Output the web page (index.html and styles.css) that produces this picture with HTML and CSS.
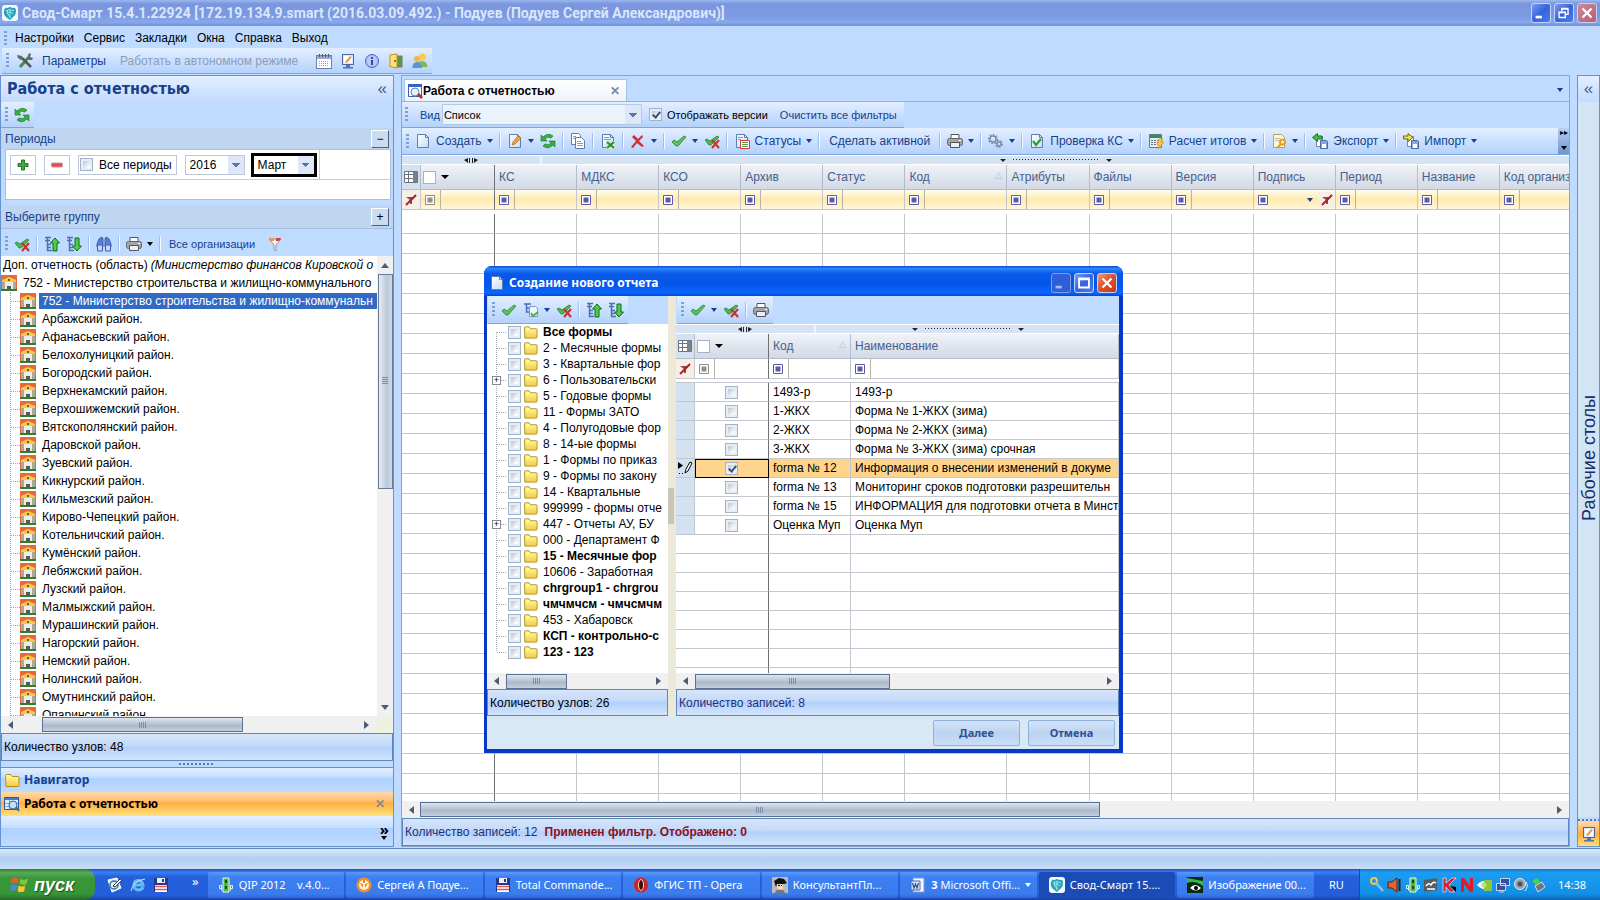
FILE: index.html
```html
<!DOCTYPE html>
<html lang="ru">
<head>
  <meta charset="UTF-8" />
  <meta name="viewport" content="width=device-width, initial-scale=1.0"/>
  <title>Свод-Смарт</title>
  <link rel="stylesheet" href="styles.css">
</head>
<body>
  <!-- Icons -->
  <svg class="sprite" aria-hidden="true">
    <defs>
      <linearGradient id="g-fold" x2="0" y2="1"><stop stop-color="#fffbb0"/><stop offset="1" stop-color="#f6cc3c"/></linearGradient>
      <linearGradient id="g-page" x2="1" y2="1"><stop stop-color="#fff"/><stop offset="1" stop-color="#c4dcf4"/></linearGradient>
    </defs>
    <symbol id="i-app" viewBox="0 0 16 16"><rect width="16" height="16" rx="3" fill="#eefafd"/><path d="M2 5q1-3 4-2 2-2 4 0 4-1 4 3 0 4-3 6l-3 3-4-3Q1 9 2 5z" fill="#2ba3bd"/><path d="M4 6q4-3 8 0M5 9q3-4 6 0M8 5v8M5 5q0 4 3 7" stroke="#a6e6ee" fill="none"/></symbol>
    <symbol id="i-tools" viewBox="0 0 16 16"><path d="M3 14l8-9" stroke="#4c8a4c" stroke-width="3"/><path d="M14 14L5 5" stroke="#555" stroke-width="2.500"/><path d="M0 2l5 1 1 3-2 1-3-2zM10 5l2-5 2 1-1 3 3 1-1 2-3 0z" fill="#666"/></symbol>
    <symbol id="i-cal" viewBox="0 0 16 16"><rect x=".5" y="2.500" width="15" height="13" fill="#fff" stroke="#6f7fae"/><path d="M1 3h14v3H1z" fill="#96a7d8"/><path d="M3 8.500h10M3 10.500h10M3 12.500h10" stroke="#9a9fb8" stroke-dasharray="1 1"/><path d="M3.500 1v3M6.500 1v3M9.500 1v3M12.500 1v3" stroke="#555"/></symbol>
    <symbol id="i-mon" viewBox="0 0 16 16"><rect x="2.500" y="1.500" width="11" height="10" fill="#d7e7ff" stroke="#4a66ac"/><path d="M4 3h8v7H4z" fill="#fff"/><path d="M5 9l5-6 2 1-5 6z" fill="#e59a56"/><path d="M6 12h4v2h3v1.500H3V14h3z" fill="#5672b4"/></symbol>
    <symbol id="i-info" viewBox="0 0 16 16"><circle cx="8" cy="8" r="6.500" fill="#a9bdf3" stroke="#4d62c0"/><circle cx="8" cy="8" r="5" fill="#b9c9f6"/><path d="M7 4h2v2H7zM7 7h2v5H7z" fill="#3347b8"/></symbol>
    <symbol id="i-door" viewBox="0 0 16 16"><path d="M8 3h6v11H8z" fill="#5a9a3c" stroke="#777"/><path d="M2 2l7 -1v14l-7-1.500z" fill="#ffe27a" stroke="#c48f1c"/><circle cx="7" cy="8" r="1" fill="#7a5200"/></symbol>
    <symbol id="i-users" viewBox="0 0 16 16"><circle cx="10.500" cy="4" r="3.500" fill="#ffc94d"/><path d="M5 14q0-6 5-6t5.500 6z" fill="#7fb758"/><circle cx="5" cy="6" r="3" fill="#f0b848"/><path d="M.5 15q0-6 4.500-6t5 6z" fill="#5d92d8"/></symbol>
    <symbol id="i-refresh" viewBox="0 0 16 16"><g fill="#35b13d" stroke="#14701e" stroke-width=".6"><path d="M1 2v6h6L5 6q2-3 6-1l2-2Q8-1 3 4z"/><path d="M15 14V8H9l2 2q-2 3-6 1l-2 2q5 4 10-1z"/></g></symbol>
    <symbol id="i-plus" viewBox="0 0 16 16"><path d="M6.500 3h3v3.500H13v3H9.500V13h-3V9.500H3v-3h3.500z" fill="#3fa843" stroke="#247a29"/></symbol>
    <symbol id="i-minus" viewBox="0 0 16 16"><rect x="2.500" y="6" width="11" height="4" rx="1" fill="#e2475c" stroke="#c98" /></symbol>
    <symbol id="i-check" viewBox="0 0 16 16"><path d="M1 9l2-2 3 2 7-6 2 1-8 9H5z" fill="#5cc15c" stroke="#2b8532" stroke-width=".8"/></symbol>
    <symbol id="i-uncheck" viewBox="0 0 16 16"><path d="M1 7l2-1 3 2 7-5 2 1-8 8H5z" fill="#4ab94d" stroke="#2b8532" stroke-width=".8"/><path d="M8 7l7 8M15 7l-7 8" stroke="#c5352d" stroke-width="2.200"/></symbol>
    <symbol id="i-tree" viewBox="0 0 16 16"><path d="M1 1.500h6M1 4.500h5M3.500 2v12.500H8M3.500 8.500H7M3.500 11.500H7" stroke="#4d6fb4" stroke-width="1.500" fill="none"/></symbol>
    <symbol id="i-up" viewBox="0 0 16 16"><use href="#i-tree"/><path d="M11 2l4.500 5H13v8H9V7H6.500z" fill="#4fca50" stroke="#126a1c"/></symbol>
    <symbol id="i-down" viewBox="0 0 16 16"><use href="#i-tree"/><path d="M11 15l4.500-5H13V2H9v8H6.500z" fill="#4fca50" stroke="#126a1c"/></symbol>
    <symbol id="i-bino" viewBox="0 0 16 16"><path d="M3 3l3-2 1 2v8H1V8zM13 3l-3-2-1 2v8h6V8z" fill="#5a7fd2" stroke="#3f5cb0"/><path d="M1.500 9h5v6h-5zM9.500 9h5v6h-5z" fill="#c6d6fa" stroke="#3f5cb0"/></symbol>
    <symbol id="i-print" viewBox="0 0 16 16"><path d="M4 1.500h8V6H4z" fill="#fff" stroke="#555"/><rect x=".5" y="5.500" width="15" height="7" rx="2" fill="#a5a5a8" stroke="#66666a"/><path d="M3.500 9.500h9v5h-9z" fill="#e8f1fb" stroke="#555"/><path d="M12 7h2v1h-2z" fill="#fff"/></symbol>
    <symbol id="i-funnel" viewBox="0 0 16 16"><path d="M2 3h12l-5 6v6l-2-1.500V9z" fill="#f3f5fa" stroke="#8d93a6"/><path d="M2 2h5v3H3z" fill="#f09a3a"/><path d="M9 2h5l-2 3H9z" fill="#d2413a"/></symbol>
    <symbol id="i-house" viewBox="0 0 16 16"><path d="M0 0h16v16H0z" fill="#e8683c"/><path d="M1 6h14v8H1z" fill="#a9ab98"/><path d="M4 7h8v7H4z" fill="#eceee6"/><path d="M1 7V5l7-3 7 3v2z" fill="#ffc844"/><path d="M7 4h2v2H7z" fill="#6b5a4a"/><path d="M6 11h4v3H6z" fill="#5a5652"/><path d="M0 14h16v2H0z" fill="#2e7d28"/></symbol>
    <symbol id="i-folder" viewBox="0 0 16 16"><path d="M1.500 3.500q0-1 1-1h4l1.500 2h6q1 0 1 1v8q0 1-1 1h-12z" fill="url(#g-fold)" stroke="#b38f22"/></symbol>
    <symbol id="i-page" viewBox="0 0 16 16"><path d="M2.500 1.500h8l3 3v10h-11z" fill="url(#g-page)" stroke="#5c7fae"/><path d="M10.500 1.500v3h3" fill="none" stroke="#5c7fae"/></symbol>
    <symbol id="i-edit" viewBox="0 0 16 16"><use href="#i-page"/><path d="M5 12l1-3 5-6 3 2-6 6z" fill="#f0a040" stroke="#a85e18" stroke-width=".6"/></symbol>
    <symbol id="i-copy" viewBox="0 0 16 16"><path d="M1.500 .5h7l2 2v9h-9z" fill="#fff" stroke="#5c7fae"/><path d="M3 3.500h3M3 5.500h2" stroke="#7f9ccc"/><path d="M5.500 4.500h6l3 3v8h-9z" fill="#fff" stroke="#5c7fae"/><path d="M7 8.500h4M7 10.500h6M7 12.500h6" stroke="#7f9ccc"/></symbol>
    <symbol id="i-excel" viewBox="0 0 16 16"><use href="#i-page"/><path d="M4 4.500h5M4 6.500h7" stroke="#7f9ccc"/><path d="M6 8h9v8H6z" fill="#cfeccf"/><path d="M7 9l7 6M14 9l-7 6" stroke="#2c8a34" stroke-width="2"/></symbol>
    <symbol id="i-x" viewBox="0 0 16 16"><path d="M2 4l2-2 4 4 4-4 1 2-4 4 5 5-2 1-5-4-4 5-2-1 5-6z" fill="#d22d2a"/></symbol>
    <symbol id="i-status" viewBox="0 0 16 16"><use href="#i-page"/><path d="M4 4.500h5M4 6.500h3" stroke="#7f9ccc"/><path d="M6.500 7.500h9v8h-9z" fill="#fff" stroke="#d0392f"/><path d="M8 9.500h6M8 11.500h6M8 13.500h6" stroke="#5a9a5a"/></symbol>
    <symbol id="i-gears" viewBox="0 0 16 16"><g fill="none" stroke="#8a94a6" stroke-width="2" stroke-dasharray="2 1"><circle cx="5" cy="6" r="4"/><circle cx="11" cy="11" r="3"/></g><g fill="none" stroke="#6c7890"><circle cx="5" cy="6" r="3"/><circle cx="11" cy="11" r="2"/></g></symbol>
    <symbol id="i-okpage" viewBox="0 0 16 16"><use href="#i-page"/><path d="M4 8l3 4 5-6" stroke="#2f9e36" stroke-width="2.200" fill="none"/></symbol>
    <symbol id="i-calc" viewBox="0 0 16 16"><path d="M1.500 1.500h12v13h-12z" fill="#e6ecf4" stroke="#66788f"/><path d="M2 2h11v3H2z" fill="#2f9440"/><path d="M3 7.500h9M3 9.500h9M3 11.500h9" stroke="#66788f" stroke-dasharray="2 1"/><path d="M11 6l4 0-2 3h3l-6 7 1-4H9z" fill="#ffc83a" stroke="#c88a1c" stroke-width=".6"/></symbol>
    <symbol id="i-key" viewBox="0 0 16 16"><path d="M2.500 1.500h8l3 3v10h-11z" fill="#fff7cf" stroke="#b3a16a"/><path d="M4 5.500h5M4 7.500h4" stroke="#b9b9b9"/><circle cx="11.500" cy="9" r="2.500" fill="none" stroke="#e0a01c" stroke-width="2"/><path d="M10 11l-4 4" stroke="#e0a01c" stroke-width="2"/></symbol>
    <symbol id="i-disk" viewBox="0 0 16 16"><path d="M4.500 3.500h6v10h-6z" fill="#fff" stroke="#6d87b5"/><path d="M8.500 7.500h6l1 1v7h-7z" fill="#8aa6d8" stroke="#4d6aa5"/><path d="M10 11h4v4h-4z" fill="#fff"/></symbol>
    <symbol id="i-export" viewBox="0 0 16 16"><use href="#i-disk"/><path d="M.5 4.500l5-4V3H10v3H5.500v2.500z" fill="#3fc043" stroke="#14701e"/></symbol>
    <symbol id="i-import" viewBox="0 0 16 16"><use href="#i-disk"/><path d="M10 4.500l-5-4V3H.5v3H5v2.500z" fill="#ece04a" stroke="#6f6a12"/></symbol>
    <symbol id="i-grid" viewBox="0 0 16 16"><path d="M1.500 2.500h13v11h-13z" fill="#fff" stroke="#6b7280"/><path d="M1 5.500h14M1 9.500h14M5.500 3v10" stroke="#6b7280"/><path d="M10 3h4v10h-4z" fill="#7b828f"/></symbol>
    <symbol id="i-nofilter" viewBox="0 0 16 16"><path d="M3 5h9l-3 3v4H7V8z" fill="#8c4a4a"/><path d="M3 13L13 3" stroke="#b01f2c" stroke-width="2"/></symbol>
    <symbol id="i-box" viewBox="0 0 12 12"><path d="M1.500 1.500h9v9h-9z" fill="#fff" stroke="currentColor"/><path d="M3.500 3.500h5v5h-5z" fill="currentColor"/></symbol>
    <symbol id="i-report" viewBox="0 0 16 16"><path d="M1.500 1.500h13v12h-13z" fill="#fff" stroke="#3c5fae"/><path d="M1 1h14v3H1z" fill="#3463c4"/><circle cx="8" cy="9" r="4" fill="#e4f1fc" stroke="#5c87bd"/><path d="M11 11l4 4" stroke="#b32a22" stroke-width="2.500"/></symbol>
    <symbol id="i-navrep" viewBox="0 0 16 16"><path d="M.5 1.500h14v12H.5z" fill="#dcecff" stroke="#2f5ba0"/><path d="M1 2h13v2H1z" fill="#4a78c8"/><path d="M1 7.500h13M1 10.500h13M5.500 4v9" stroke="#84a6d8"/><circle cx="9" cy="9" r="4" fill="#bfe0f8" stroke="#39689f"/><path d="M12 11l3 4" stroke="#39689f" stroke-width="2"/></symbol>
    <symbol id="i-forms" viewBox="0 0 16 16"><path d="M1 2h7M3.500 2v8H7M3.500 6H7" stroke="#4d6fb4" stroke-width="1.500" fill="none"/><path d="M6.500 4.500h6l2 2v8h-8z" fill="#eaf3ff" stroke="#7b98c9"/><path d="M8 11l2 3 5-4" stroke="#4fae4f" stroke-width="2" fill="none"/></symbol>
    <symbol id="i-rowedit" viewBox="0 0 16 16"><path d="M1 2l5 3.500L1 9z"/><path d="M2 13.500h6" stroke="#000" stroke-dasharray="1 2"/><path d="M8 13l1-4 4-7 2 1-4 8z" fill="#fff" stroke="#000"/></symbol>
    <symbol id="i-win" viewBox="0 0 20 20"><path d="M2 4q4-2 7 0L8 9Q5 7 1 9z" fill="#ee5a30"/><path d="M11 4q3 2 8 0l-2 6q-4 1-7-1z" fill="#7ec53c"/><path d="M1 11q3-2 7 0l-2 6q-3-2-6 0z" fill="#4a86e8"/><path d="M9 11q4 2 7 0l-1 6q-4 2-7 0z" fill="#fbc72c"/></symbol>
    <symbol id="i-desk" viewBox="0 0 16 16"><path d="M1 3l9-2 4 10-9 4z" fill="#d8f2fb" stroke="#fff"/><circle cx="7" cy="8" r="4" fill="none" stroke="#3d7796" stroke-width="1.500"/><path d="M6 9l7-7 2 1-7 7z" fill="#fff" stroke="#335"/></symbol>
    <symbol id="i-ie" viewBox="0 0 16 16"><path d="M13 10q-1 3-5 3-4-.5-4-5t4-4.500q4 0 5 4.500H5" fill="none" stroke="#62bdf5" stroke-width="3"/><path d="M1 14Q3 4 15 2" stroke="#cdeafd" fill="none"/></symbol>
    <symbol id="i-floppy" viewBox="0 0 16 16"><path d="M1 1h14v14H1z" fill="#223a8e"/><path d="M4 1h8v5H4z" fill="#e9eef8"/><path d="M9 2h2v3H9z" fill="#223a8e"/><path d="M2 8h12v7H2z" fill="#fff"/><path d="M2 9.500h12M2 12.500h12" stroke="#e05a50" stroke-width="1.500"/></symbol>
    <symbol id="i-qip" viewBox="0 0 16 16"><path d="M5 1h6v14H5z" fill="#4fb84a" stroke="#e7ffe4"/><path d="M7 3h2v3H7zM7 9h2v3H7z" fill="#154d14"/><path d="M1.500 8.500h2v5M1.500 8.500v3h2M14.500 8.500h-2v5M14.500 8.500v3h-2" fill="none" stroke="#e4f4e4"/></symbol>
    <symbol id="i-mail" viewBox="0 0 16 16"><circle cx="8" cy="8" r="7.500" fill="#f0902a"/><circle cx="8" cy="8" r="5" fill="#fff2dd"/><path d="M4 6l3 1v4zM12 6L9 7v4zM7 3h2v3H7z" fill="#e8842a"/></symbol>
    <symbol id="i-opera" viewBox="0 0 16 16"><ellipse cx="8" cy="8" rx="7" ry="7.500" fill="#d3231e"/><ellipse cx="8" cy="8" rx="2.500" ry="5.500" fill="#3c0b0b" stroke="#f6d0cc"/></symbol>
    <symbol id="i-kons" viewBox="0 0 16 16"><path d="M0 0h16v16H0z" fill="#b6bcc6"/><path d="M2 4l5-3 5 1 3 4-3 1-7 0-1 3z" fill="#111"/><path d="M5 7h6v5l-3 1-3-2z" fill="#f2d7b8"/><path d="M6 8.500h2M9 8.500h1" stroke="#111"/><path d="M3 16q1-4 5-3 4-1 5 3z" fill="#777"/></symbol>
    <symbol id="i-word" viewBox="0 0 16 16"><path d="M3 1h11v14H3z" fill="#f4f8ff" stroke="#7d9bd4"/><path d="M1 4h9v9H1z" fill="#dce8fb" stroke="#4468b4"/><path d="M2.500 6l1.500 5 1.500-4L7 11l1.500-5" stroke="#2b4c9c" fill="none" stroke-width="1.200"/></symbol>
    <symbol id="i-img" viewBox="0 0 16 16"><path d="M0 0h16v16H0z" fill="#0b2a12"/><path d="M0 1l16 3v5Q8 3 0 6z" fill="#35b84a"/><path d="M3 11q5-6 11 0-5 5-11 0z" fill="#fff"/><circle cx="9" cy="11" r="2"/></symbol>
    <symbol id="i-tkey" viewBox="0 0 16 16"><circle cx="5" cy="4" r="3" fill="none" stroke="#f2c24a" stroke-width="2"/><path d="M7 6l7 8" stroke="#7fc5f2" stroke-width="2.500"/></symbol>
    <symbol id="i-sound" viewBox="0 0 16 16"><path d="M1 5h4l5-4v14l-5-4H1z" fill="#d8683a" stroke="#5a1f0a"/><path d="M12.500 2v12" stroke="#222" fill="none" stroke-width="2"/></symbol>
    <symbol id="i-oo" viewBox="0 0 16 16"><path d="M1 3l13-2v12l-13 2z" fill="#555d66"/><path d="M3 9q3-4 5-1 2-4 5-2M4 12h8" stroke="#fff" fill="none" stroke-width="1.500"/></symbol>
    <symbol id="i-kasp" viewBox="0 0 16 16"><path d="M2 1h3v5l6-5h4L8 8l6 7H9L5 10v5H2z" fill="#d9232e" stroke="#fff" stroke-width=".6"/><path d="M9 9l6 6v-5z"/></symbol>
    <symbol id="i-n" viewBox="0 0 16 16"><path d="M2 15V1h3l6 8V1h3v14h-3L5 7v8z" fill="#e01b24"/></symbol>
    <symbol id="i-nv" viewBox="0 0 16 16"><path d="M0 8q5-6 10-3v7Q4 13 0 8z" fill="#f3f7ea"/><path d="M7 3h8v11H7z" fill="#8cc63c"/><circle cx="7" cy="8" r="2.500" fill="#b9dd8a"/></symbol>
    <symbol id="i-net" viewBox="0 0 16 16"><path d="M5.500 1.500h9v7h-9zM1.500 6.500h9v7h-9z" fill="#3a4f9c" stroke="#c9d6f2"/><path d="M4 15h5" stroke="#ccc"/></symbol>
    <symbol id="i-vol" viewBox="0 0 16 16"><circle cx="7" cy="7" r="5.500" fill="#9aa3ad" stroke="#e6ecf2"/><circle cx="7" cy="7" r="2.500" fill="#4a525c"/><path d="M13 5q3 4-1 9" stroke="#e6ecf2" fill="none"/></symbol>
    <symbol id="i-usb" viewBox="0 0 16 16"><path d="M4 9l7-4 3 5-7 5z" fill="#6e7780" stroke="#d8dde2"/><path d="M1 4l5-3 3 4-4 3z" fill="#4fcf4a"/></symbol>
  </svg>

  <!-- Main window title -->
  <header class="titlebar">
    <svg class="ic"><use href="#i-app"/></svg>
    <h1>Свод-Смарт 15.4.1.22924 [172.19.134.9.smart (2016.03.09.492.) - Подуев (Подуев Сергей Александрович)]</h1>
    <div class="win-buttons">
      <button class="wb" aria-label="Свернуть"><svg viewBox="0 0 20 20"><path d="M4 13h7v3H4z" fill="#fff"/></svg></button>
      <button class="wb" aria-label="Восстановить"><svg viewBox="0 0 20 20"><path d="M7.500 8V5.500h7v6H12M4.500 9h7v6h-7zM4 9.500h8M7 5h8" stroke="#fff" fill="none" stroke-width="1.500"/></svg></button>
      <button class="wb wb-close dim" aria-label="Закрыть"><svg viewBox="0 0 20 20"><path d="M5 5l10 10M15 5L5 15" stroke="#fff" stroke-width="2.500"/></svg></button>
    </div>
  </header>

  <nav class="menu">
    <span class="grip"></span>
    <button>Настройки</button><button>Сервис</button><button>Закладки</button><button>Окна</button><button>Справка</button><button>Выход</button>
  </nav>
  <div class="bar top-bar">
    <span class="grip"></span>
    <button class="tb wide"><svg class="ic"><use href="#i-tools"/></svg>Параметры</button>
    <button class="tb off" disabled>Работать в автономном режиме</button>
    <button class="tb" aria-label="Календарь"><svg class="ic"><use href="#i-cal"/></svg></button>
    <button class="tb" aria-label="Рабочий стол"><svg class="ic"><use href="#i-mon"/></svg></button>
    <button class="tb" aria-label="О программе"><svg class="ic"><use href="#i-info"/></svg></button>
    <button class="tb" aria-label="Выход"><svg class="ic"><use href="#i-door"/></svg></button>
    <button class="tb" aria-label="Пользователи"><svg class="ic"><use href="#i-users"/></svg></button>
  </div>

  <main class="work">
    <!-- Left panel -->
    <aside class="side">
      <div class="side-head"><h2>Работа с отчетностью</h2><button class="plain" aria-label="Скрыть">«</button></div>
      <div class="bar refresh-bar"><span class="grip"></span><button class="tb" aria-label="Обновить"><svg class="ic"><use href="#i-refresh"/></svg></button></div>
      <div class="sect"><span>Периоды</span><button class="fold" aria-label="Свернуть периоды">−</button></div>
      <div class="periods">
        <div class="period-row">
          <button class="pbtn" aria-label="Добавить"><svg class="ic"><use href="#i-plus"/></svg></button>
          <button class="pbtn" aria-label="Удалить"><svg class="ic"><use href="#i-minus"/></svg></button>
          <label class="all"><input type="checkbox"> Все периоды</label>
          <select class="drop year" aria-label="Год"><option>2016</option></select>
          <select class="drop month" aria-label="Месяц"><option>Март</option></select>
          <span class="period-end"></span>
        </div>
      </div>
      <div class="sect group"><span>Выберите группу</span><button class="fold" aria-label="Развернуть группы">+</button></div>
      <div class="bar side-bar">
        <span class="grip"></span>
        <button class="tb" aria-label="Снять отметки"><svg class="ic"><use href="#i-uncheck"/></svg></button><i class="sep"></i>
        <button class="tb" aria-label="Свернуть дерево"><svg class="ic"><use href="#i-up"/></svg></button>
        <button class="tb" aria-label="Развернуть дерево"><svg class="ic"><use href="#i-down"/></svg></button><i class="sep"></i>
        <button class="tb" aria-label="Найти"><svg class="ic"><use href="#i-bino"/></svg></button><i class="sep"></i>
        <button class="tb" aria-label="Печать"><svg class="ic"><use href="#i-print"/></svg><b class="caret"></b></button><i class="sep"></i>
        <button class="tb all-org">Все организации</button>
        <button class="tb" aria-label="Фильтр"><svg class="ic"><use href="#i-funnel"/></svg></button>
      </div>
      <div class="tree-wrap">
        <div class="tree">
          <div class="t-top">Доп. отчетность (область) <em>(Министерство финансов Кировской о</em></div>
          <div class="t-root"><svg class="ic"><use href="#i-house"/></svg>752 - Министерство строительства и жилищно-коммунального</div>
          <ul id="orgs"></ul>
        </div>
        <div class="vscroll"><b class="ar up"></b><span class="thumb"></span><b class="ar down"></b></div>
      </div>
      <div class="hscroll side-scroll"><b class="ar left"></b><span class="thumb"></span><b class="ar right"></b><i class="corner"></i></div>
      <div class="status dark">Количество узлов: 48</div>
      <div class="splitter"><span></span></div>
      <button class="nav"><svg class="ic"><use href="#i-folder"/></svg>Навигатор</button>
      <button class="nav on"><svg class="ic"><use href="#i-navrep"/></svg>Работа с отчетностью<span class="nav-x">✕</span></button>
      <div class="nav more"><span>»</span><b class="caret"></b></div>
    </aside>

    <!-- Report list -->
    <section class="content">
      <div class="tabs">
        <div class="tab"><svg class="ic"><use href="#i-report"/></svg><span>Работа с отчетностью</span><button class="plain tab-x" aria-label="Закрыть вкладку">✕</button></div>
        <b class="caret"></b>
      </div>
      <div class="bar view-bar">
        <span class="grip"></span>
        <label for="view">Вид</label>
        <select class="drop view" id="view"><option>Список</option></select>
        <label class="ver"><input type="checkbox" checked> Отображать версии</label>
        <button class="tb">Очистить все фильтры</button>
      </div>
      <div class="bar main-bar">
        <span class="grip"></span>
        <button class="tb"><svg class="ic"><use href="#i-page"/></svg>Создать<b class="caret far"></b></button><i class="sep"></i>
        <button class="tb" aria-label="Изменить"><svg class="ic"><use href="#i-edit"/></svg><b class="caret"></b></button>
        <button class="tb" aria-label="Обновить"><svg class="ic"><use href="#i-refresh"/></svg></button><i class="sep"></i>
        <button class="tb" aria-label="Копировать"><svg class="ic"><use href="#i-copy"/></svg></button><i class="sep"></i>
        <button class="tb" aria-label="Excel"><svg class="ic"><use href="#i-excel"/></svg></button><i class="sep"></i>
        <button class="tb" aria-label="Удалить"><svg class="ic"><use href="#i-x"/></svg><b class="caret"></b></button><i class="sep"></i>
        <button class="tb" aria-label="Отметить"><svg class="ic"><use href="#i-check"/></svg><b class="caret"></b></button>
        <button class="tb" aria-label="Снять отметки"><svg class="ic"><use href="#i-uncheck"/></svg></button><i class="sep"></i>
        <button class="tb"><svg class="ic"><use href="#i-status"/></svg>Статусы<b class="caret far"></b></button><i class="sep"></i>
        <button class="tb text-only">Сделать активной</button><i class="sep"></i>
        <button class="tb" aria-label="Печать"><svg class="ic"><use href="#i-print"/></svg><b class="caret"></b></button><i class="sep"></i>
        <button class="tb" aria-label="Операции"><svg class="ic"><use href="#i-gears"/></svg><b class="caret"></b></button><i class="sep"></i>
        <button class="tb"><svg class="ic"><use href="#i-okpage"/></svg>Проверка КС<b class="caret far"></b></button><i class="sep"></i>
        <button class="tb"><svg class="ic"><use href="#i-calc"/></svg>Расчет итогов<b class="caret far"></b></button><i class="sep"></i>
        <button class="tb" aria-label="Подпись"><svg class="ic"><use href="#i-key"/></svg><b class="caret"></b></button><i class="sep"></i>
        <button class="tb"><svg class="ic"><use href="#i-export"/></svg>Экспорт<b class="caret far"></b></button><i class="sep"></i>
        <button class="tb"><svg class="ic"><use href="#i-import"/></svg>Импорт<b class="caret far"></b></button>
        <span class="overflow"><span>▸▸</span><b class="caret"></b></span>
      </div>
      <div class="bands"><span class="band1"><i></i></span><span class="band2"><i></i></span></div>
      <div class="grid-wrap">
        <table class="grid main-grid" id="main-grid"></table>
      </div>
      <div class="hscroll main-scroll"><b class="ar left"></b><span class="thumb"></span><b class="ar right"></b></div>
      <div class="status">Количество записей: 12 <strong>Применен фильтр. Отображено: 0</strong></div>
    </section>

    <!-- Collapsed right panel -->
    <aside class="dock">
      <button class="plain" aria-label="Показать">«</button>
      <div class="dock-body"><span>Рабочие столы</span></div>
      <div class="dots"></div>
      <button class="dock-ic" aria-label="Рабочие столы"><svg class="ic"><use href="#i-mon"/></svg></button>
    </aside>
  </main>
  <div class="app-status"></div>

  <!-- New report dialog -->
  <div class="dialog" role="dialog" aria-labelledby="dlg-title">
    <div class="dlg-head">
      <svg class="ic"><use href="#i-page"/></svg>
      <h2 id="dlg-title">Создание нового отчета</h2>
      <div class="win-buttons">
        <button class="wb dim" aria-label="Свернуть"><svg viewBox="0 0 20 20"><path d="M4 13h7v3H4z" fill="#9fb9f2"/></svg></button>
        <button class="wb" aria-label="Развернуть"><svg viewBox="0 0 20 20"><path d="M4.500 5h11v10h-11zM4 6h12" stroke="#fff" fill="none" stroke-width="2"/></svg></button>
        <button class="wb wb-close" aria-label="Закрыть"><svg viewBox="0 0 20 20"><path d="M5 5l10 10M15 5L5 15" stroke="#fff" stroke-width="2.500"/></svg></button>
      </div>
    </div>
    <div class="dlg-body">
      <div class="forms">
        <div class="tool-line"><div class="bar">
          <span class="grip"></span>
          <button class="tb" aria-label="Отметить"><svg class="ic"><use href="#i-check"/></svg></button>
          <button class="tb" aria-label="Отметить ветку"><svg class="ic"><use href="#i-forms"/></svg><b class="caret"></b></button>
          <button class="tb" aria-label="Снять отметки"><svg class="ic"><use href="#i-uncheck"/></svg></button><i class="sep"></i>
          <button class="tb" aria-label="Свернуть дерево"><svg class="ic"><use href="#i-up"/></svg></button>
          <button class="tb" aria-label="Развернуть дерево"><svg class="ic"><use href="#i-down"/></svg></button>
        </div></div>
        <ul id="forms"></ul>
        <div class="hscroll"><b class="ar left"></b><span class="thumb"></span><b class="ar right"></b></div>
        <div class="status dark">Количество узлов: 26</div>
      </div>
      <div class="dlg-split"><span></span></div>
      <div class="picks">
        <div class="tool-line"><div class="bar">
          <span class="grip"></span>
          <button class="tb" aria-label="Отметить"><svg class="ic"><use href="#i-check"/></svg><b class="caret"></b></button>
          <button class="tb" aria-label="Снять отметки"><svg class="ic"><use href="#i-uncheck"/></svg></button><i class="sep"></i>
          <button class="tb" aria-label="Печать"><svg class="ic"><use href="#i-print"/></svg></button>
        </div></div>
        <div class="bands"><span class="band1"><i></i></span><span class="band2"><i></i></span></div>
        <div class="grid-wrap">
          <table class="grid pick-grid" id="pick-grid"></table>
        </div>
        <div class="hscroll"><b class="ar left"></b><span class="thumb"></span><b class="ar right"></b></div>
        <div class="status">Количество записей: 8</div>
      </div>
    </div>
    <div class="dlg-foot"><button>Далее</button><button>Отмена</button></div>
  </div>

  <!-- Taskbar -->
  <footer class="taskbar">
    <button class="start"><svg class="flag"><use href="#i-win"/></svg>пуск</button>
    <div class="quick">
      <svg class="ic"><use href="#i-desk"/></svg><svg class="ic"><use href="#i-ie"/></svg><svg class="ic"><use href="#i-floppy"/></svg><span>»</span>
    </div>
    <div class="tasks">
      <button class="task"><svg class="ic"><use href="#i-qip"/></svg>QIP 2012 &nbsp;&nbsp; v.4.0...</button>
      <button class="task"><svg class="ic"><use href="#i-mail"/></svg>Сергей А Подуе...</button>
      <button class="task"><svg class="ic"><use href="#i-floppy"/></svg>Total Commande...</button>
      <button class="task"><svg class="ic"><use href="#i-opera"/></svg>ФГИС ТП - Opera</button>
      <button class="task"><svg class="ic"><use href="#i-kons"/></svg>КонсультантПл...</button>
      <button class="task"><svg class="ic"><use href="#i-word"/></svg><span><strong>3</strong> Microsoft Offi...</span><b class="caret"></b></button>
      <button class="task active"><svg class="ic"><use href="#i-app"/></svg>Свод-Смарт 15....</button>
      <button class="task"><svg class="ic"><use href="#i-img"/></svg>Изображение 00...</button>
    </div>
    <span class="lang">RU</span>
    <div class="tray">
      <svg class="ic"><use href="#i-tkey"/></svg><svg class="ic"><use href="#i-sound"/></svg><svg class="ic"><use href="#i-qip"/></svg><svg class="ic"><use href="#i-oo"/></svg><svg class="ic"><use href="#i-kasp"/></svg><svg class="ic"><use href="#i-n"/></svg><svg class="ic"><use href="#i-nv"/></svg><svg class="ic"><use href="#i-net"/></svg><svg class="ic"><use href="#i-vol"/></svg><svg class="ic"><use href="#i-usb"/></svg>
      <time>14:38</time>
    </div>
  </footer>

  <script>
    const orgs = ['Арбажский', 'Афанасьевский', 'Белохолуницкий', 'Богородский', 'Верхнекамский', 'Верхошижемский',
      'Вятскополянский', 'Даровской', 'Зуевский', 'Кикнурский', 'Кильмезский', 'Кирово-Чепецкий', 'Котельничский',
      'Кумёнский', 'Лебяжский', 'Лузский', 'Малмыжский', 'Мурашинский', 'Нагорский', 'Немский', 'Нолинский',
      'Омутнинский', 'Опаринский'].map(n => n + ' район.');
    orgs.unshift('752 - Министерство строительства и жилищно-коммунальн');

    // b - bold, x - has an expand box
    const forms = [
      ['Все формы', 'b'], ['2 - Месячные формы'], ['3 - Квартальные фор'], ['6 - Пользовательски', 'x'],
      ['5 - Годовые формы'], ['11 - Формы ЗАТО'], ['4 - Полугодовые фор'], ['8 - 14-ые формы'],
      ['1 - Формы по приказ'], ['9 - Формы по закону'], ['14 - Квартальные'], ['999999 - формы отче'],
      ['447 - Отчеты АУ, БУ', 'x'], ['000 - Департамент Ф'], ['15 - Месячные фор', 'b'], ['10606 - Заработная'],
      ['chrgroup1 - chrgrou', 'b'], ['чмчмчсм - чмчсмчм', 'b'], ['453 - Хабаровск'], ['КСП - контрольно-с', 'b'], ['123 - 123', 'b']
    ];

    const picks = [
      ['1493-р', '1493-р'],
      ['1-ЖКХ', 'Форма № 1-ЖКХ (зима)'],
      ['2-ЖКХ', 'Форма № 2-ЖКХ (зима)'],
      ['3-ЖКХ', 'Форма № 3-ЖКХ (зима) срочная'],
      ['forma № 12', 'Информация о внесении изменений в докуме'],
      ['forma № 13', 'Мониторинг сроков подготовки разрешительн'],
      ['forma № 15', 'ИНФОРМАЦИЯ для подготовки отчета в Минст'],
      ['Оценка Муп', 'Оценка Муп']
    ];

    const icon = (name, cls = 'ic') => `<svg class="${cls}"><use href="#i-${name}"/></svg>`;

    function gridHead(cols) {
      const heads = cols.map(c => `<th>${c}${c === 'Код' ? '<span class="sort">△</span>' : ''}</th>`).join('');
      const filters = cols.map(c => {
        const sign = c === 'Подпись';
        return `<td><div class="filter"><button aria-label="Условие: ${c}">${icon('box', 'box')}</button><input type="text" aria-label="${c}"${sign ? ' class="bare"' : ''}>` +
          (sign ? `<b class="caret"></b><button class="clear" aria-label="Сбросить">${icon('nofilter')}</button>` : '') + '</div></td>';
      }).join('');
      return `<thead><tr class="heads"><th class="rowhead">${icon('grid')}</th>
        <th class="sel"><span><input type="checkbox" class="flat" aria-label="Отметить все"><b class="caret"></b></span></th>${heads}</tr>
        <tr class="filters"><td class="rowhead">${icon('nofilter')}</td>
        <td class="sel"><div class="filter"><button aria-label="Условие">${icon('box', 'box grey')}</button><input type="text" aria-label="Отметка"></div></td>${filters}</tr>
        <tr class="gap"><td colspan="${cols.length + 2}"></td></tr></thead>`;
    }

    function emptyRows(count, cols) {
      return `<tr><td colspan="2" class="sel"></td>${'<td></td>'.repeat(cols)}</tr>`.repeat(count);
    }

    document.getElementById('orgs').innerHTML = orgs.map((n, i) =>
      `<li${i ? '' : ' class="selected"'}>${icon('house')}<span>${n}</span></li>`).join('');

    document.getElementById('forms').innerHTML = forms.map(([n, f = '']) =>
      `<li class="${f === 'b' ? 'bold' : ''}">${f === 'x' ? '<i class="exp">+</i>' : ''}<label><input type="checkbox">${icon('folder')}<span>${n}</span></label></li>`).join('');

    const mainCols = ['КС', 'МДКС', 'КСО', 'Архив', 'Статус', 'Код', 'Атрибуты', 'Файлы', 'Версия', 'Подпись', 'Период', 'Название', 'Код организ'];
    document.getElementById('main-grid').innerHTML =
      '<colgroup><col class="c-head"><col class="c-sel">' + mainCols.map(c => `<col class="${c === 'Код' ? 'c-code' : 'c-std'}">`).join('') + '</colgroup>' +
      gridHead(mainCols) + '<tbody>' + emptyRows(40, mainCols.length) + '</tbody>';

    document.getElementById('pick-grid').innerHTML =
      '<colgroup><col class="c-head"><col class="c-sel"><col class="c-std"><col></colgroup>' +
      gridHead(['Код', 'Наименование']) + '<tbody>' + picks.map(([code, name], i) =>
        `<tr class="${i === 4 ? 'current' : ''}"><td class="rowhead">${i === 4 ? icon('rowedit') : ''}</td>
        <td class="sel mark"><input type="checkbox" aria-label="${code}"${i === 4 ? ' checked' : ''}></td><td>${code}</td><td>${name}</td></tr>`).join('') +
      emptyRows(12, 2) + '</tbody>';
  </script>
</body>
</html>
```
FILE: styles.css
```css
/* Reset */
* {
  margin: 0;
  padding: 0;
  box-sizing: border-box;
}
html, body {
  height: 100%;
}
body {
  display: flex;
  flex-direction: column;
  overflow: hidden;
  background-color: #bfdbff;
  font-family: "Liberation Sans", Arial, sans-serif;
  font-size: 12px;
  line-height: 16px;
  color: #000;
  white-space: nowrap;
}
button, select, input {
  font: inherit;
  color: inherit;
  border: none;
  background: none;
}
ul {
  list-style: none;
}
.sprite {
  position: absolute;
  width: 0;
  height: 0;
}
.ic {
  width: 16px;
  height: 16px;
  flex: none;
  display: block;
}
.caret {
  display: inline-block;
  border: 3px solid transparent;
  border-top: 4px solid #15428b;
  border-bottom: none;
  flex: none;
}

/* Check boxes */
input[type="checkbox"] {
  appearance: none;
  width: 13px;
  height: 13px;
  flex: none;
  border: 1px solid #a3b3ca;
  background: linear-gradient(135deg, #a3b1c4, #fff 75%);
  box-shadow: inset 0 0 0 2px #e6edf5;
  position: relative;
}
input[type="checkbox"]:checked::after {
  content: "";
  position: absolute;
  left: 4px;
  top: 1px;
  width: 3px;
  height: 6px;
  border: solid #33507e;
  border-width: 0 2px 2px 0;
  transform: rotate(40deg);
}
input[type="checkbox"].flat {
  background: #fff;
  box-shadow: none;
}

/* Title bar */
.titlebar {
  flex: none;
  height: 26px;
  display: flex;
  align-items: center;
  gap: 4px;
  padding: 0 3px 0 2px;
  background: linear-gradient(#9cb8ee, #7a96df 15%, #7b99e1 60%, #87a9ea 85%, #7590da);
}
.titlebar h1 {
  font: bold 14px/20px Roboto, sans-serif;
  color: #dbe6fa;
  flex: 1;
}
.win-buttons {
  display: flex;
  gap: 3px;
}
.wb {
  width: 20px;
  height: 20px;
  border: 1px solid #c4d4f8;
  border-radius: 3px;
  background: linear-gradient(135deg, #7f9df0, #3563dc 50%, #4a7cf0);
}
.wb svg {
  display: block;
  width: 18px;
  height: 18px;
}
.wb-close {
  background: linear-gradient(135deg, #f09878, #dc4e2c 50%, #c23a18);
}
.wb-close.dim {
  background: linear-gradient(135deg, #c98a9e, #b8606e);
}

/* Menu and toolbars */
.menu {
  flex: none;
  height: 22px;
  display: flex;
  align-items: center;
  gap: 10px;
  padding: 2px 0 0 4px;
}
.menu .grip {
  margin-right: -2px;
}
.grip {
  width: 3px;
  height: 15px;
  flex: none;
  background: repeating-linear-gradient(#7d9fd4 0 2px, transparent 2px 4px);
}
.bar {
  display: flex;
  align-items: center;
  gap: 6px;
  height: 26px;
  flex: none;
  align-self: flex-start;
  padding: 0 4px;
  background: linear-gradient(#e3efff, #cbe0ff 50%, #b4d2fb);
  border-bottom: 1px solid #7fa5dd;
  color: #15428b;
}
.tb {
  display: flex;
  align-items: center;
  gap: 5px;
  height: 22px;
}
.tb .far {
  margin-left: 7px;
}
.tb .ic + .caret {
  margin-left: 0;
}
.tb.off {
  color: #8d9db5;
}
.text-only {
  padding: 0 3px;
}
.sep {
  width: 2px;
  height: 16px;
  flex: none;
  border-left: 1px solid #9ebfec;
  border-right: 1px solid #f4f9ff;
}
.top-bar {
  margin-left: 2px;
  gap: 8px;
}
.top-bar .wide {
  gap: 9px;
}
.top-bar .off {
  padding: 0 10px 0 6px;
}

.work {
  flex: 1;
  min-height: 0;
  display: flex;
  gap: 7px;
  padding-top: 1px;
}

/* Left panel */
.side {
  width: 394px;
  flex: none;
  display: flex;
  flex-direction: column;
  border: 1px solid #6593cf;
}
.side-head {
  height: 26px;
  display: flex;
  align-items: center;
  justify-content: space-between;
  padding: 0 6px;
  flex: none;
  background: linear-gradient(#e3efff, #c3dbfd);
}
.side-head h2 {
  font: bold 16px/20px "DejaVu Sans Condensed", "DejaVu Sans", sans-serif;
  color: #15428b;
}
.plain {
  font-size: 17px;
  color: #44608f;
}
.sect {
  height: 21px;
  flex: none;
  display: flex;
  align-items: center;
  justify-content: space-between;
  padding: 0 4px;
  background-color: #c0d6f0;
  color: #15428b;
}
.fold {
  width: 18px;
  height: 18px;
  line-height: 14px;
  border: 1px solid #fff;
  border-right-color: #4d5f7c;
  border-bottom-color: #4d5f7c;
  background-color: #c9dcf2;
  color: #000;
}
.periods {
  height: 51px;
  flex: none;
  margin: 0 2px 0 4px;
  border: 1px solid #a9bfdb;
  background-color: #fff;
}
.period-row {
  display: flex;
  align-items: center;
  gap: 8px;
  height: 30px;
  padding-left: 4px;
  border-bottom: 1px solid #c6cdd8;
}
.pbtn, .all, .year {
  height: 20px;
  border: 1px solid #bcc8da;
}
.pbtn {
  width: 26px;
  display: flex;
  align-items: center;
  justify-content: center;
}
.all {
  display: flex;
  align-items: center;
  gap: 6px;
  padding: 0 4px 0 1px;
}
.drop {
  appearance: none;
  padding-left: 4px;
  background:
    linear-gradient(45deg, transparent 50%, #5577a8 50%) no-repeat right 8px center / 4px 4px,
    linear-gradient(-45deg, transparent 50%, #5577a8 50%) no-repeat right 4px center / 4px 4px,
    linear-gradient(#dce8f8, #dce8f8) no-repeat right 0 center / 16px 100%,
    #fff;
}
.year {
  width: 60px;
}
.month {
  width: 66px;
  height: 24px;
  border: 3px solid #000;
  margin-left: -2px;
}
.period-end {
  border-left: 1px solid #c6cdd8;
  align-self: stretch;
  margin-left: -6px;
}
.sect.group {
  margin-top: 5px;
  height: 24px;
  border-bottom: 1px solid #a3bfe3;
}
.side-bar {
  height: 27px;
  align-self: stretch;
  border-bottom: none;
  background: none;
  font-size: 11px;
  padding-top: 2px;
}
.side-bar .all-org {
  margin: 0 6px 0 2px;
}
.side-bar .caret {
  border-top-color: #000;
}
.tree-wrap {
  flex: 1;
  min-height: 0;
  display: flex;
  background-color: #fff;
}
.tree {
  flex: 1;
  min-width: 0;
  overflow: hidden;
}
.t-top, .t-root, .tree li {
  height: 18px;
  display: flex;
  align-items: center;
}
.t-top {
  gap: 3px;
  padding-left: 2px;
}
.t-root {
  gap: 6px;
}
.tree ul {
  margin-left: 9px;
  border-left: 1px dotted #a89cb0;
}
.tree li::before {
  content: "";
  width: 9px;
  border-top: 1px dotted #a89cb0;
  flex: none;
}
.tree li span {
  flex: 1;
  margin-left: 3px;
  padding-left: 3px;
  overflow: hidden;
}
.tree li.selected span {
  background-color: #316ac5;
  color: #fff;
}

/* Scroll bars */
.ar {
  flex: none;
  border: 4px solid transparent;
}
.ar.up { border-top: none; border-bottom: 5px solid #4d5b74; }
.ar.down { border-bottom: none; border-top: 5px solid #4d5b74; }
.ar.left { border-left: none; border-right: 5px solid #4d5b74; }
.ar.right { border-right: none; border-left: 5px solid #4d5b74; }
.vscroll {
  width: 16px;
  background-color: #f0f0f0;
  display: flex;
  flex-direction: column;
  align-items: center;
  padding: 7px 0 6px;
}
.vscroll .thumb {
  width: 15px;
  height: 48%;
  margin: 6px 0 auto;
  border: 1px solid #6b7a94;
  background:
    repeating-linear-gradient(#7d8ca5 0 1px, transparent 1px 2px) no-repeat center / 6px 8px,
    linear-gradient(90deg, #e8eef6, #b9c8da 60%, #cfdae8);
}
.hscroll {
  height: 17px;
  flex: none;
  background-color: #f0f0f0;
  display: flex;
  align-items: center;
  padding: 0 7px;
}
.hscroll .thumb {
  height: 15px;
  margin: 0 auto 0 7px;
  border: 1px solid #5a6f94;
  background:
    repeating-linear-gradient(90deg, #7d8ca5 0 1px, transparent 1px 2px) no-repeat center / 8px 6px,
    linear-gradient(#dde5ef, #b9c6d6 45%, #a9b8cb 55%, #c3cfde);
}
.side-scroll .thumb {
  width: 201px;
  margin-left: 29px;
}
.side-scroll {
  padding-right: 2px;
}
.side-scroll .corner {
  width: 16px;
  height: 16px;
  margin-left: 6px;
  background-color: #eef0e0;
}
.main-scroll .thumb {
  width: 59%;
  margin-left: 6px;
}

.status {
  height: 28px;
  flex: none;
  display: flex;
  align-items: center;
  gap: 7px;
  padding: 0 2px;
  border: 1px solid #5f86bd;
  background: linear-gradient(#d7e6f9, #c2d9fa 45%, #b3d0fa 50%, #d3e5fd);
  color: #1a2f7a;
}
.status.dark {
  color: #000;
}
.status strong {
  color: #8b1020;
}
.splitter {
  height: 7px;
  flex: none;
  display: flex;
  justify-content: center;
  align-items: center;
  border-bottom: 1px solid #6593cf;
}
.splitter span {
  width: 36px;
  height: 2px;
  background: repeating-linear-gradient(90deg, #567db1 0 2px, transparent 2px 4px);
}
.nav {
  height: 24px;
  flex: none;
  display: flex;
  align-items: center;
  gap: 4px;
  padding: 0 8px 0 3px;
  background: linear-gradient(#e3efff, #c4ddff 40%, #add1ff 41%, #c0dbff);
  font: bold 12px/16px "Noto Sans", sans-serif;
  color: #15428b;
}
.nav.on {
  background: linear-gradient(#ffd9aa, #ffbb6e 40%, #ffab3f 41%, #fee17b);
  color: #000;
}
.nav-x {
  margin-left: auto;
  color: #8a8a8a;
}
.nav.more {
  height: 30px;
  flex-direction: column;
  align-items: flex-end;
  justify-content: center;
  gap: 0;
  padding: 0 4px;
  font-size: 15px;
  line-height: 14px;
  color: #000;
}
.nav.more .caret {
  border-top-color: #000;
  margin-right: 2px;
}

/* Report list */
.content {
  flex: 1;
  min-width: 0;
  display: flex;
  flex-direction: column;
  border: 1px solid #8aa5c8;
}
.tabs {
  height: 26px;
  flex: none;
  display: flex;
  align-items: center;
  justify-content: space-between;
  padding: 3px 6px 0 2px;
  border-bottom: 1px solid #8fb2e2;
}
.tab {
  display: flex;
  align-items: center;
  align-self: stretch;
  width: 223px;
  padding: 0 6px 0 2px;
  background: linear-gradient(#fff, #eef3fb);
  border: 1px solid #a8c2e6;
  border-bottom: none;
  font-weight: bold;
}
.tab-x {
  margin-left: auto;
  font-size: 12px;
  color: #7c879b;
}
.view-bar {
  gap: 4px;
  font-size: 11px;
  padding: 0 7px 0 3px;
}
.view-bar .grip {
  margin-right: 8px;
}
.drop.view {
  width: 200px;
  height: 21px;
  margin-left: -2px;
  padding-left: 1px;
  color: #000;
  border: 1px solid #b3c9e8;
  background-color: #eaf2fc;
}
.ver {
  display: flex;
  align-items: center;
  gap: 5px;
  margin: 0 8px 0 3px;
  color: #000;
}
.main-bar {
  align-self: stretch;
  height: 27px;
  padding-right: 0;
}
.overflow {
  margin-left: auto;
  width: 11px;
  align-self: stretch;
  display: flex;
  flex-direction: column;
  align-items: center;
  justify-content: space-between;
  padding-bottom: 4px;
  background: linear-gradient(#b8d0f4, #6f94cf);
  color: #000;
  font-size: 8px;
  line-height: 10px;
}
.overflow .caret {
  border-top-color: #000;
}
.bands {
  height: 10px;
  flex: none;
  display: flex;
  align-items: center;
  background-color: #d5e3f2;
  border-top: 1px solid #fff;
  border-bottom: 1px solid #fff;
}
.band1, .band2 {
  display: flex;
  justify-content: center;
  align-items: center;
  height: 8px;
}
.band1 {
  width: 140px;
  border-right: 2px solid #eef4fb;
}
.band1 i {
  display: flex;
  width: 14px;
  height: 5px;
  justify-content: space-between;
  background: repeating-linear-gradient(90deg, #222 0 1px, transparent 1px 3px) no-repeat center / 5px 5px;
}
.band1 i::before, .band1 i::after {
  content: "";
  border: solid transparent;
  border-width: 2px 4px 3px 0;
  border-right-color: #222;
}
.band1 i::after {
  border-width: 2px 0 3px 4px;
  border-left-color: #222;
}
.band2 {
  flex: 1;
}
.band2 i {
  display: flex;
  justify-content: space-between;
  width: 112px;
  background: repeating-linear-gradient(90deg, #222 0 1px, transparent 1px 3px) no-repeat center 0 / 86px 1px;
}
.band2 i::before, .band2 i::after {
  content: "";
  border: 3px solid transparent;
  border-top-color: #222;
  border-bottom: none;
}

/* Grids */
.grid-wrap {
  flex: 1;
  min-height: 0;
  overflow: hidden;
  background-color: #fff;
}
.grid {
  table-layout: fixed;
  border-collapse: separate;
  border-spacing: 0;
}
.main-grid {
  width: 1180px;
}
.pick-grid {
  width: 100%;
}
.c-head { width: 19px; }
.c-sel { width: 74px; }
.c-std { width: 82px; }
.c-code { width: 102px; }
.grid th {
  height: 25px;
  padding: 0 4px;
  text-align: left;
  font-weight: normal;
  color: #44608f;
  background: linear-gradient(#f0f3f8, #dde3ec 60%, #d3dae6);
  border-right: 1px solid #b3bccb;
  border-bottom: 1px solid #b3bccb;
  overflow: hidden;
}
.grid .sort {
  float: right;
  font-size: 9px;
  color: #b4bbc8;
  line-height: 12px;
}
.grid .rowhead {
  padding: 0 1px;
  background: #d3e1f0;
}
.grid .sel {
  border-right-color: #707070;
}
.grid th.sel {
  padding: 0 2px;
}
.grid th.sel span {
  display: flex;
  align-items: center;
  gap: 5px;
}
.grid th .caret {
  border-width: 4px 4px 0;
  border-top-color: #000;
}
.grid td {
  height: 20px;
  padding: 0 4px;
  border-right: 1px solid #c4c8ce;
  border-bottom: 1px solid #c4c8ce;
  overflow: hidden;
}
.filters td {
  padding: 0;
  background: linear-gradient(#fffdf2, #ffeaad 50%, #fff6dc);
}
.grid .filters .rowhead {
  background: #f7eee6;
}
.filter {
  display: flex;
  align-items: center;
  height: 19px;
}
.filter button {
  padding: 0 4px 0 3px;
  color: #5a5aa8;
}
.filter input {
  flex: 1;
  min-width: 0;
  align-self: stretch;
  border-left: 1px solid #b9b59f;
}
.filter input.bare {
  border-left: none;
}
.box {
  display: block;
  width: 12px;
  height: 12px;
}
.box.grey {
  color: #8f8f88;
}
.filter .caret {
  margin-right: 6px;
}
.filter .clear {
  padding: 0;
  background-color: #f7eee6;
}
.grid .gap td {
  height: 4px;
  border-right: none;
  border-bottom: none;
}
.pick-grid .filters td {
  background: #fff;
}
.pick-grid .gap td {
  border-bottom: 1px solid #c4c8ce;
}
.pick-grid tbody td {
  height: 19px;
}
.mark input {
  display: block;
  margin: 0 auto;
}
.grid .current td {
  background-color: #ffd48c;
}
.grid .current .rowhead {
  background-color: #d3e1f0;
}
.grid .current .mark {
  border-right-color: #000;
  outline: 1px solid #000;
  outline-offset: -1px;
}

/* Right dock */
.dock {
  width: 23px;
  flex: none;
  display: flex;
  flex-direction: column;
  border: 1px solid #6593cf;
}
.dock .plain {
  height: 26px;
  background: linear-gradient(#e3efff, #c3dbfd);
}
.dock-body {
  flex: 1;
  display: flex;
  align-items: center;
  justify-content: center;
  background-color: #d3e4f5;
  padding-bottom: 4px;
}
.dock-body span {
  writing-mode: vertical-rl;
  transform: rotate(180deg);
  font-size: 18px;
  line-height: 20px;
  color: #15306b;
}
.dots {
  height: 5px;
  background: repeating-linear-gradient(90deg, #567db1 0 2px, transparent 2px 4px) no-repeat center / 100% 2px;
}
.dock-ic {
  height: 24px;
  display: flex;
  align-items: center;
  justify-content: center;
  background: linear-gradient(#ffd9aa, #ffab3f 50%, #fee17b);
}
.app-status {
  height: 21px;
  flex: none;
  margin-top: 1px;
  border-top: 1px solid #5f86bd;
  background: linear-gradient(#d9e9fb, #b0cdf3 50%, #c9def8);
}

/* Dialog */
.dialog {
  position: absolute;
  left: 484px;
  top: 266px;
  width: 639px;
  height: 487px;
  display: flex;
  flex-direction: column;
  padding: 0 4px 4px 3px;
  border-radius: 8px 8px 0 0;
  background-color: #0838c8;
}
.dlg-head {
  height: 30px;
  flex: none;
  display: flex;
  align-items: center;
  gap: 4px;
  margin: 0 -4px 0 -3px;
  padding: 3px 6px 0 5px;
  border-radius: 8px 8px 0 0;
  background: linear-gradient(#0a46c8, #2a86ff 8%, #0a5ae8 25%, #0555e8 60%, #0a66fe 90%, #0446cc);
}
.dlg-head h2 {
  flex: 1;
  font: bold 12px/20px "Noto Sans", sans-serif;
  color: #fff;
}
.dlg-head .dim {
  background: #2f5fd8;
  border-color: #7f9de8;
}
.dlg-body {
  flex: 1;
  min-height: 0;
  display: flex;
  background-color: #fff;
}
.forms {
  width: 181px;
  flex: none;
  display: flex;
  flex-direction: column;
}
.tool-line {
  height: 28px;
  flex: none;
  display: flex;
  padding-left: 1px;
  background-color: #bfdbff;
}
.tool-line .bar {
  height: 28px;
}
.forms ul {
  flex: 1;
  min-height: 0;
  overflow: hidden;
}
.forms li {
  height: 16px;
  padding-left: 21px;
  background:
    repeating-linear-gradient(#aaa 0 1px, transparent 1px 2px) no-repeat 9px 0 / 1px 100%,
    repeating-linear-gradient(90deg, #aaa 0 1px, transparent 1px 2px) no-repeat 10px 8px / 10px 1px;
}
.forms li:first-child {
  background-position: 9px 8px, 10px 8px;
}
.forms li:last-child {
  background-size: 1px 50%, 10px 1px;
}
.forms label {
  display: flex;
  align-items: center;
  gap: 2px;
}
.forms label .ic {
  width: 15px;
}
.forms label span {
  margin-left: 3px;
}
.forms .bold {
  font-weight: bold;
}
.exp {
  float: left;
  width: 9px;
  height: 9px;
  margin: 4px 0 0 -16px;
  border: 1px solid #888;
  background-color: #fff;
  font: 9px/7px "Liberation Sans", sans-serif;
  text-align: center;
}
.forms .thumb {
  width: 61px;
}
.forms .hscroll, .picks .hscroll {
  height: 16px;
}
.dlg-body .status {
  height: 27px;
}
.dlg-split {
  width: 8px;
  flex: none;
  display: flex;
  align-items: center;
  background-color: #ece9d8;
}
.dlg-split span {
  width: 6px;
  height: 36px;
  background-color: #c9c6b8;
}
.picks {
  flex: 1;
  min-width: 0;
  display: flex;
  flex-direction: column;
}
.picks .thumb {
  width: 195px;
}
.dlg-foot {
  height: 33px;
  flex: none;
  display: flex;
  align-items: center;
  justify-content: flex-end;
  gap: 8px;
  padding-right: 4px;
  background-color: #d9e8f5;
}
.dlg-foot button {
  width: 87px;
  height: 26px;
  border: 1px solid #8fb0dc;
  border-radius: 2px;
  background: linear-gradient(#d5e5f8, #bcd3f0 50%, #c9def8);
  color: #2a5298;
  font: bold 11px/16px "Noto Sans", sans-serif;
}

/* Taskbar */
.taskbar {
  height: 31px;
  flex: none;
  display: flex;
  align-items: center;
  background: linear-gradient(#1f4fc0, #3a80f0 10%, #2560dc 25%, #245edb 85%, #1941a5);
  color: #fff;
  font-family: "Noto Sans", sans-serif;
  font-size: 11px;
}
.start {
  width: 95px;
  align-self: stretch;
  display: flex;
  align-items: center;
  gap: 5px;
  padding-left: 10px;
  border-radius: 0 10px 10px 0;
  background: linear-gradient(#2f7d2f, #57ab57 12%, #3a963a 30%, #379637 80%, #256a25);
  font: italic bold 18px/24px "Liberation Sans", sans-serif;
  text-shadow: 1px 1px 1px #1d4d1d;
}
.flag {
  width: 19px;
  height: 19px;
}
.quick {
  display: flex;
  gap: 7px;
  padding: 0 9px 0 12px;
}
.quick span {
  margin: -4px 0 0 16px;
  font-size: 13px;
}
.tasks {
  flex: 1;
  min-width: 0;
  display: grid;
  grid-template-columns: repeat(8, 1fr);
  gap: 2px;
}
.task {
  height: 26px;
  min-width: 0;
  display: flex;
  align-items: center;
  gap: 5px;
  padding: 0 6px 0 10px;
  overflow: hidden;
  white-space: nowrap;
  border-radius: 2px;
  background: linear-gradient(#5a98fa, #3c80f2 20%, #3a7bee 85%, #2f67d4);
}
.task .caret {
  margin-left: auto;
  border-top-color: #fff;
}
.task.active {
  background: #1b4bb4;
}
.lang {
  width: 45px;
  text-align: center;
}
.tray {
  align-self: stretch;
  display: flex;
  align-items: center;
  gap: 2px;
  padding: 0 14px 0 9px;
  background: linear-gradient(#0f78d8, #1c9cf0 12%, #1290e8 80%, #0c62b8);
  border-left: 1px solid #0d4fa8;
}
.tray time {
  margin-left: 9px;
}
```
